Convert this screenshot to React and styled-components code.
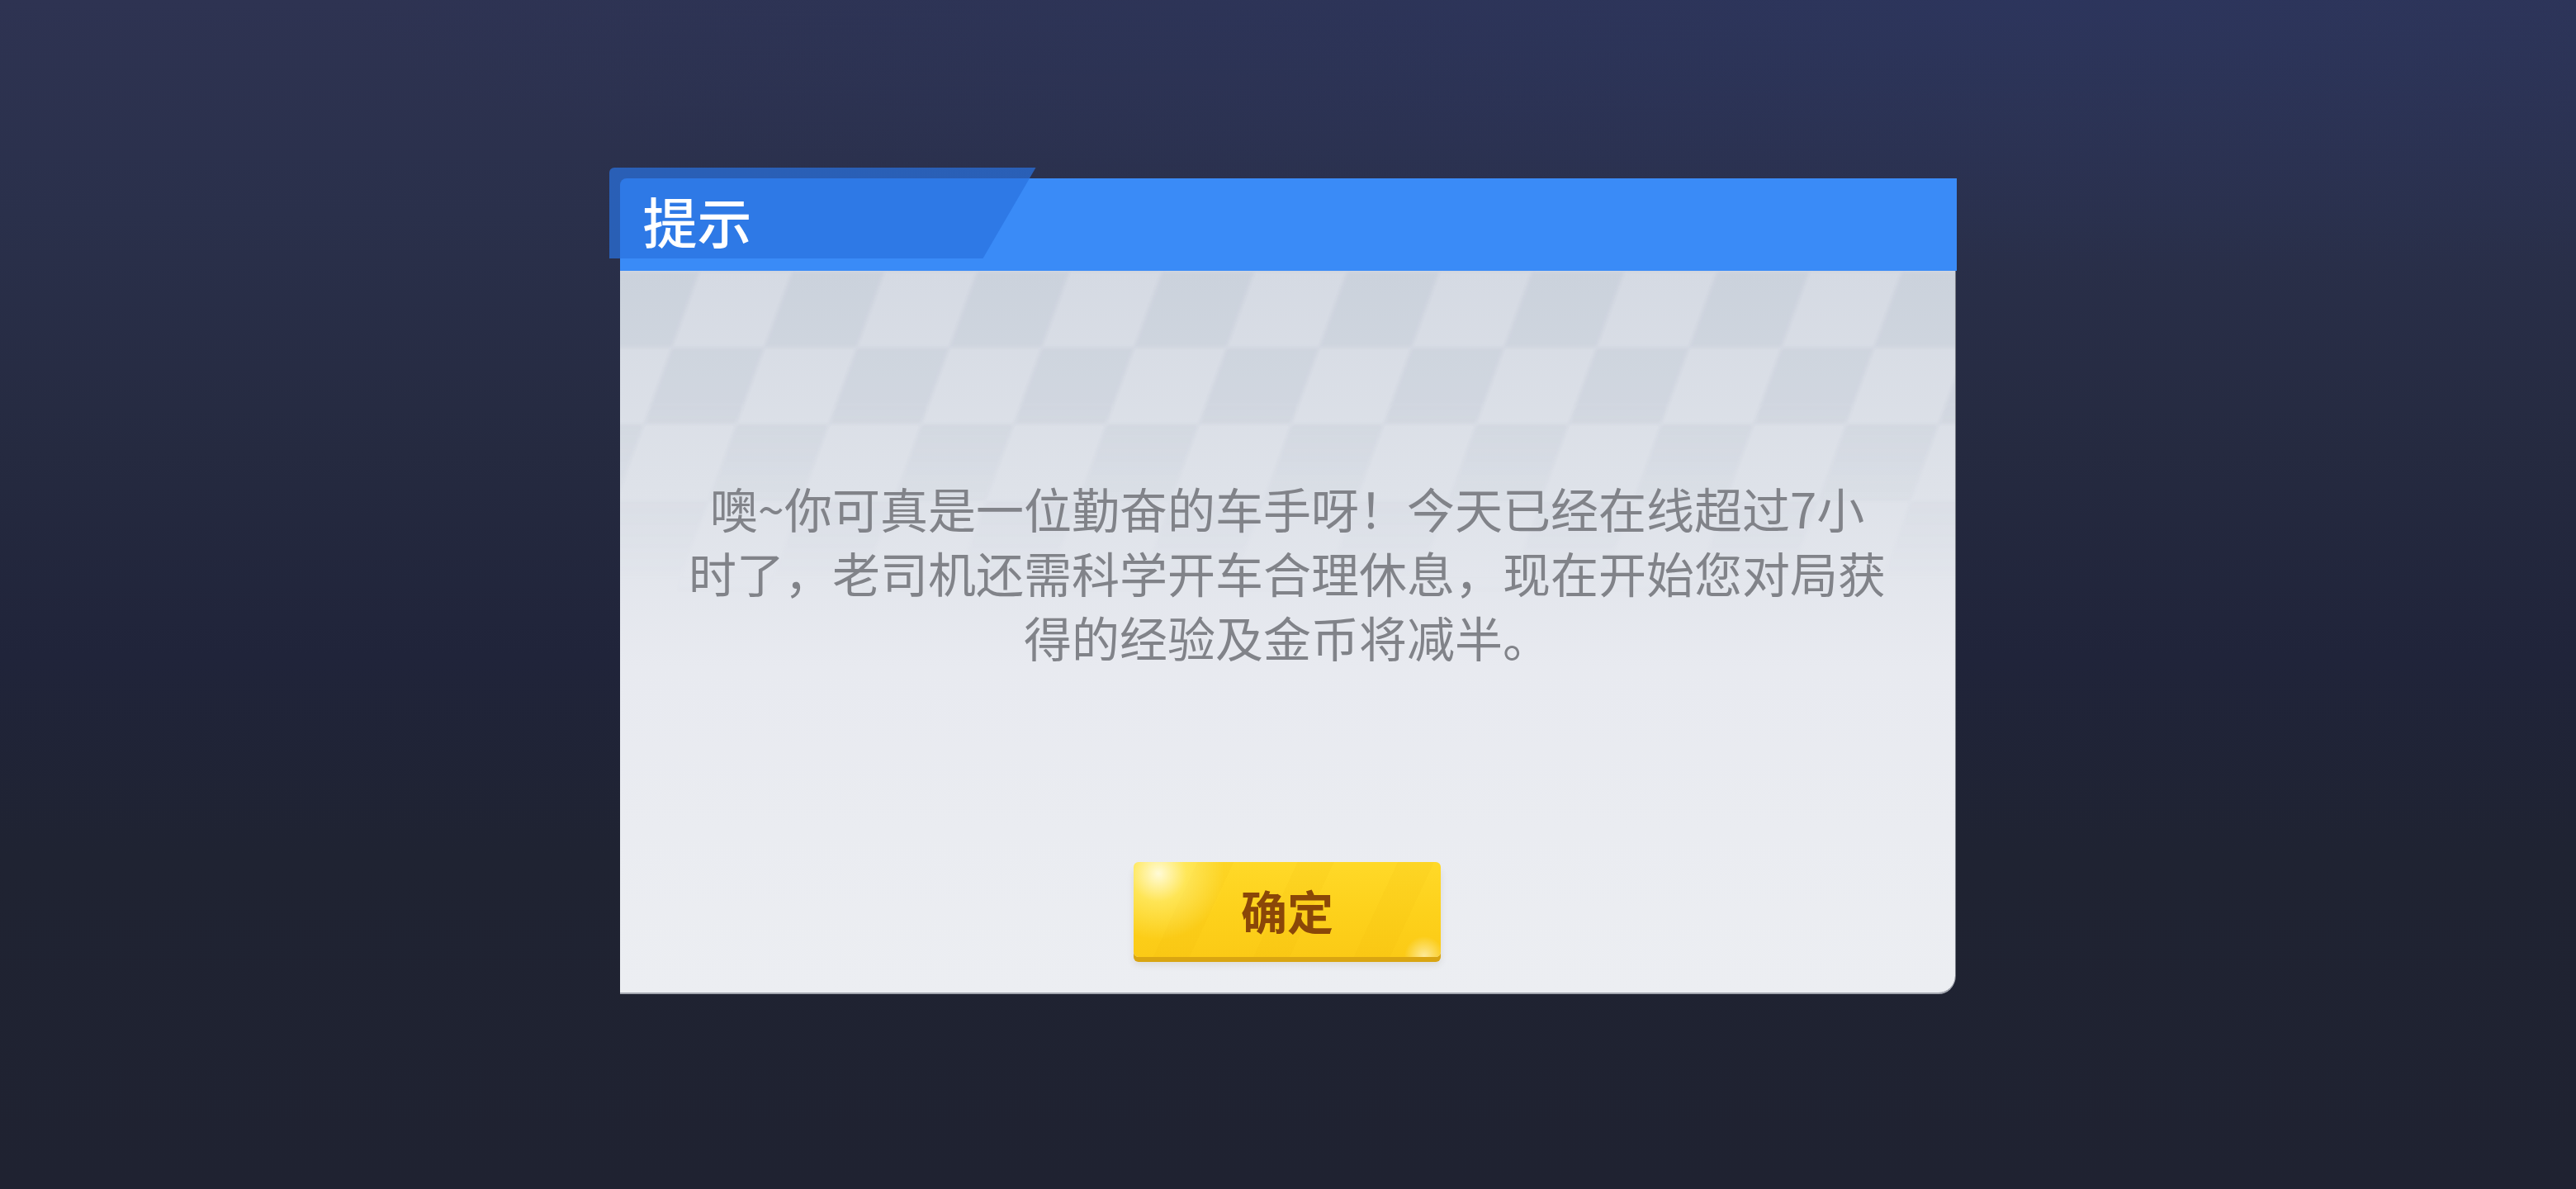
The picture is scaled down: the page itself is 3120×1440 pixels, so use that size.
import styled, { createGlobalStyle } from "styled-components";

const GlobalStyle = createGlobalStyle`
  html, body {
    margin: 0;
    padding: 0;
  }
  body {
    font-family: "Noto Sans CJK SC", "Noto Sans", sans-serif;
  }
`;

const Screen = styled.div`
  width: 3120px;
  height: 1440px;
  box-sizing: border-box;
  padding-top: 216px;
  display: flex;
  flex-direction: column;
  align-items: center;
  overflow: hidden;
  background:
    radial-gradient(ellipse 2600px 420px at 80% 0%, rgba(42, 56, 108, 0.4), transparent 80%),
    linear-gradient(180deg, #2e3352 0%, #2a304b 18%, #252a40 38%, #20243a 55%, #1f2332 72%, #1f2231 100%);
`;

const Dialog = styled.div`
  width: 1619px;
  display: flex;
  flex-direction: column;
`;

const Header = styled.div`
  height: 112px;
  display: flex;
  background: #3a8bf7;
  border-top-left-radius: 8px;
`;

/* darker slanted tab holding the title, sticking out past the bar */
const Tab = styled.div`
  width: 517px;
  height: 110px;
  margin: -13px 0 0 -13px;
  box-sizing: border-box;
  padding: 16px 0 0 41px;
  display: flex;
  align-items: center;
  background: rgba(41, 114, 223, 0.72);
  border-top-left-radius: 6px;
  clip-path: polygon(0 0, 100% 0, calc(100% - 64px) 100%, 0 100%);
`;

const Title = styled.h2`
  margin: 0;
  font-size: 66px;
  line-height: 1;
  font-weight: 500;
  color: #ffffff;
`;

const Body = styled.div`
  position: relative;
  width: 1617px;
  height: 874px;
  display: flex;
  flex-direction: column;
  align-items: center;
  overflow: hidden;
  border-bottom-right-radius: 20px;
  background: linear-gradient(180deg, #d5dae3 0%, #dee2e9 30%, #e8eaf0 55%, #eceef2 100%);
  box-shadow: 0 2px 0 #a3a7b0, 1px 0 0 #7c8089;

  /* slanted checker flag fading out below */
  &::before {
    content: "";
    position: absolute;
    top: -4px;
    left: 0;
    right: -260px;
    height: 460px;
    background: conic-gradient(
      transparent 0 25%,
      rgba(118, 132, 160, 0.09) 0 50%,
      transparent 0 75%,
      rgba(118, 132, 160, 0.09) 0
    );
    background-size: 224px 186px;
    background-position: -14px 4px;
    transform: skewX(-20deg);
    transform-origin: 0 0;
    filter: blur(2px);
    -webkit-mask-image: linear-gradient(180deg, #000 0, #000 160px, rgba(0, 0, 0, 0.45) 260px, transparent 400px);
    mask-image: linear-gradient(180deg, #000 0, #000 160px, rgba(0, 0, 0, 0.45) 260px, transparent 400px);
    pointer-events: none;
  }
`;

const Message = styled.p`
  position: relative;
  margin: 248px 0 0;
  font-size: 58px;
  line-height: 78px;
  color: #818389;
  text-align: center;
  white-space: nowrap;
`;

const ConfirmButton = styled.button`
  position: relative;
  margin-top: 234px;
  width: 372px;
  height: 115px;
  border: none;
  border-radius: 6px;
  padding: 0;
  font-family: inherit;
  font-size: 56px;
  font-weight: 700;
  color: #8a4708;
  cursor: pointer;
  background:
    radial-gradient(circle at 30px 14px, rgba(255, 255, 235, 0.9) 0, rgba(255, 246, 140, 0.5) 34px, transparent 80px),
    radial-gradient(circle at 352px 114px, rgba(255, 255, 240, 0.6) 0, transparent 24px),
    repeating-linear-gradient(115deg, transparent 0 70px, rgba(230, 170, 0, 0.08) 70px 110px),
    linear-gradient(180deg, #ffd928 0%, #fdd11b 55%, #fbca16 100%);
  box-shadow: 0 6px 0 #d9a512, 0 9px 8px rgba(80, 60, 0, 0.1);
`;

export default function App() {
  return (
    <>
      <GlobalStyle />
      <Screen>
        <Dialog>
          <Header>
            <Tab>
              <Title>提示</Title>
            </Tab>
          </Header>
          <Body>
            <Message>
              噢~你可真是一位勤奋的车手呀！今天已经在线超过7小
              <br />
              时了，老司机还需科学开车合理休息，现在开始您对局获
              <br />
              得的经验及金币将减半。
            </Message>
            <ConfirmButton>确定</ConfirmButton>
          </Body>
        </Dialog>
      </Screen>
    </>
  );
}
